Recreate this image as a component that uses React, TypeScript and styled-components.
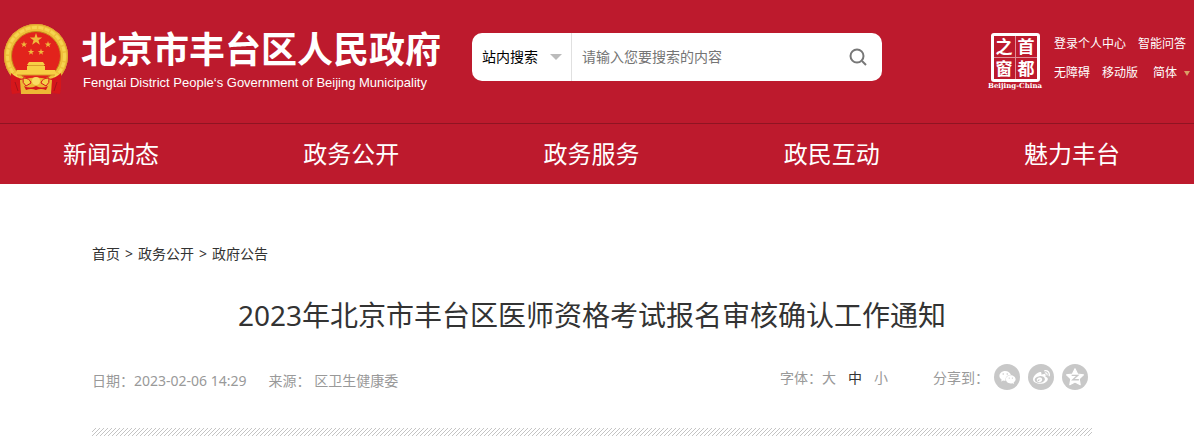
import React from "react";
import styled, { createGlobalStyle } from "styled-components";
import { FaWeixin, FaWeibo } from "react-icons/fa";

const GlobalStyle = createGlobalStyle`
  * { box-sizing: border-box; }
  body {
    margin: 0;
    background: #fff;
    color: #333;
    font-family: "Noto Sans", "Noto Sans CJK SC", sans-serif;
    font-size: 14px;
    line-height: 20px;
  }
  a { color: inherit; text-decoration: none; }
  button, input, select { font: inherit; color: inherit; border: 0; padding: 0; background: none; }
  h1, ul, ol { margin: 0; padding: 0; font-weight: 400; list-style: none; }
`;

const Header = styled.header`
  background: #bd1a2d;
  color: #fff;
`;

const TopBar = styled.div`
  display: flex;
  align-items: flex-start;
  min-height: 123px;
  padding: 24px 4px 0 3px;
`;

const Brand = styled.a`
  display: flex;
  gap: 12px;
  flex: none;
`;

const BrandName = styled.strong`
  display: block;
  padding-top: 2px;
  font-size: 36px;
  line-height: 48px;
  font-weight: 700;
  white-space: nowrap;
`;

const BrandSub = styled.span`
  display: block;
  padding-left: 2px;
  font-family: "Liberation Sans", sans-serif;
  font-size: 13px;
  line-height: 18px;
  white-space: nowrap;
`;

const Search = styled.form`
  display: flex;
  align-items: center;
  flex: 0 1 410px;
  height: 48px;
  margin: 9px auto 0 31px;
  border-radius: 10px;
  background: #fff;
  color: #000;
`;

const Scope = styled.div`
  display: flex;
  align-items: center;
  flex: none;
  width: 100px;
  height: 48px;
  padding: 0 9px 0 10px;
  border-right: 1px solid #e0e0e0;
`;

const ScopeSelect = styled.select`
  appearance: none;
  flex: 1;
  min-width: 0;
  height: 48px;
`;

const Caret = styled.span<{ $half: number; $tall: number; $color: string }>`
  flex: none;
  border: solid transparent;
  border-width: ${p => p.$tall}px ${p => p.$half}px 0;
  border-top-color: ${p => p.$color};
`;

const SearchInput = styled.input`
  flex: 1;
  min-width: 0;
  height: 48px;
  padding: 0 0 2px 10px;
  outline: 0;
  &::placeholder { color: #757575; }
`;

const SearchButton = styled.button`
  display: grid;
  place-items: center;
  width: 48px;
  height: 48px;
`;

const Stamp = styled.a`
  display: flex;
  flex-direction: column;
  align-items: center;
  flex: none;
  width: 56px;
  margin: 9px 11px 0 0;
`;

const Seal = styled.span`
  display: grid;
  grid-template-columns: 1fr 1fr;
  gap: 1px;
  width: 49px;
  height: 49px;
  border: 3px solid #fff;
  border-radius: 3px;
  background: #e08d97;
`;

const SealChar = styled.span`
  display: grid;
  place-items: center;
  background: #bd1a2d;
  font-size: 17px;
  line-height: 20px;
  font-weight: 700;
`;

const StampCaption = styled.span`
  font-family: "DejaVu Serif", serif;
  font-size: 7px;
  line-height: 8px;
  font-weight: 700;
  white-space: nowrap;
`;

const Tools = styled.div`
  flex: none;
  width: 136px;
  margin-top: 10px;
  font-size: 12px;
`;

const ToolRow = styled.div`
  display: flex;
  align-items: center;
  gap: 12px;
  height: 20px;
  margin-bottom: 9px;
`;

const LangButton = styled.button`
  display: flex;
  align-items: center;
  gap: 7px;
  margin-left: 3px;
`;

const Nav = styled.nav`
  border-top: 1px solid #8f1422;
`;

const NavList = styled.ul`
  display: flex;
  justify-content: space-between;
  padding: 0 74px 0 63px;
  font-size: 24px;
  line-height: 60px;
`;

const Main = styled.main`
  padding: 60px 102px 0 92px;
`;

const Crumbs = styled.ol`
  display: flex;
  gap: 5px;
`;

const Title = styled.h1`
  margin-top: 31px;
  font-size: 28px;
  line-height: 40px;
  text-align: center;
`;

const Meta = styled.div`
  display: flex;
  align-items: center;
  margin-top: 28px;
  padding-right: 4px;
  color: #999;
`;

const Origin = styled.div`
  display: flex;
  gap: 22px;
  margin-right: auto;
  padding-top: 8px;
`;

const SizePicker = styled.div`
  display: flex;
  align-items: center;
  margin-right: 45px;
  padding-top: 2px;
`;

const SizeButton = styled.button<{ $active?: boolean }>`
  margin-right: 12px;
  color: ${p => (p.$active ? "#333" : "#999")};
  &:last-child { margin-right: 0; }
`;

const Share = styled.div`
  display: flex;
  align-items: center;
  gap: 5px;
`;

const ShareLabel = styled.span`
  padding-top: 2px;
`;

const ShareButtons = styled.div`
  display: flex;
  gap: 8px;
`;

const ShareButton = styled.button`
  display: grid;
  place-items: center;
  width: 26px;
  height: 26px;
  border-radius: 50%;
  background: #c8c8c8;
  color: #fff;
`;

const Stripe = styled.div`
  height: 8px;
  margin-top: 37px;
  background: linear-gradient(135deg, #fff 45%, #c4c4c4 45% 55%, #fff 55%) 0 0 / 4px 4px;
`;

const starPath = (cx: number, cy: number, r: number, inner = 0.4) =>
  Array.from({ length: 10 }, (_, i) => {
    const radius = i % 2 ? r * inner : r;
    const angle = -Math.PI / 2 + (i * Math.PI) / 5;
    return `${i ? "L" : "M"}${cx + radius * Math.cos(angle)} ${cy + radius * Math.sin(angle)}`;
  }).join("") + "Z";

const Emblem = () => (
  <svg width="66" height="71" viewBox="0 0 66 71" aria-hidden="true">
    <circle cx="33" cy="32" r="32" fill="#efbf3a" />
    <circle cx="33" cy="32" r="28.500" fill="none" stroke="#f6d450" strokeWidth="3" strokeDasharray="5 1.500" />
    <circle cx="33" cy="32" r="31.500" fill="none" stroke="#e0a530" />
    <circle cx="33" cy="32" r="24.500" fill="#e2231c" stroke="#c98a1c" />
    <g fill="#f0b93c">
      <path d={starPath(33, 15.500, 6.500)} />
      <path d={starPath(21, 20.500, 3.400)} />
      <path d={starPath(45, 20.500, 3.400)} />
      <path d={starPath(28, 28, 3.400)} />
      <path d={starPath(38, 28, 3.400)} />
    </g>
    <g fill="#f7cf45">
      <path d="M26 38h14l2 3H24zM24 42h18v4H24zM14 46h38l2 5H12z" />
    </g>
    <path d="M25 41.500h16M14 51h38" stroke="#d99a2a" />
    <path d="M8 49q5 5 12 6l-3 14-8 1-1-6zM58 49q-5 5-12 6l3 14 8 1 1-6z" fill="#d5161b" />
    <path d="M12 58l3 9M54 58l-3 9" stroke="#a8121a" />
    <path d="M17 56q16-5 32 0l-1 14H18z" fill="#edb735" />
    <path d="M20 54q7 0 8 5l-5 3q-4-3-3-8zM46 54q-7 0-8 5l5 3q4-3 3-8z" fill="#f5cf48" stroke="#d5161b" />
    <path d="M21 62q6 3 12 0 6 3 12 0l-2 4q-5-2-10 0-5-2-10 0z" fill="#d5161b" />
    <circle cx="33" cy="57" r="4" fill="#f9dc62" />
  </svg>
);

const navItems = ["新闻动态", "政务公开", "政务服务", "政民互动", "魅力丰台"];

export default function App() {
  return (
    <>
      <GlobalStyle />
      <Header>
        <TopBar>
          <Brand href="#">
            <Emblem />
            <span>
              <BrandName>北京市丰台区人民政府</BrandName>
              <BrandSub>Fengtai District People‘s Government of Beijing Municipality</BrandSub>
            </span>
          </Brand>
          <Search onSubmit={e => e.preventDefault()}>
            <Scope>
              <ScopeSelect aria-label="搜索范围">
                <option>站内搜索</option>
              </ScopeSelect>
              <Caret $half={6} $tall={6} $color="#bbb" />
            </Scope>
            <SearchInput type="text" aria-label="搜索内容" placeholder="请输入您要搜索的内容" />
            <SearchButton type="submit" aria-label="搜索">
              <svg width="18" height="18" viewBox="0 0 18 18" fill="none" stroke="#777" strokeWidth="2">
                <circle cx="8" cy="8" r="6.500" />
                <path d="M13 13l4 4" />
              </svg>
            </SearchButton>
          </Search>
          <Stamp href="#">
            <Seal>
              <SealChar>之</SealChar>
              <SealChar>首</SealChar>
              <SealChar>窗</SealChar>
              <SealChar>都</SealChar>
            </Seal>
            <StampCaption>Beijing-China</StampCaption>
          </Stamp>
          <Tools>
            <ToolRow>
              <a href="#">登录个人中心</a>
              <a href="#">智能问答</a>
            </ToolRow>
            <ToolRow>
              <a href="#">无障碍</a>
              <a href="#">移动版</a>
              <LangButton type="button">
                简体
                <Caret $half={3} $tall={5} $color="#d9a066" />
              </LangButton>
            </ToolRow>
          </Tools>
        </TopBar>
        <Nav>
          <NavList>
            {navItems.map(item => (
              <li key={item}>
                <a href="#">{item}</a>
              </li>
            ))}
          </NavList>
        </Nav>
      </Header>
      <Main>
        <Crumbs>
          <li><a href="#">首页</a></li>
          <li>&gt;</li>
          <li><a href="#">政务公开</a></li>
          <li>&gt;</li>
          <li><a href="#">政府公告</a></li>
        </Crumbs>
        <Title>2023年北京市丰台区医师资格考试报名审核确认工作通知</Title>
        <Meta>
          <Origin>
            <span>日期：2023-02-06 14:29</span>
            <span>来源： 区卫生健康委</span>
          </Origin>
          <SizePicker>
            <span>字体：</span>
            <SizeButton type="button">大</SizeButton>
            <SizeButton type="button" $active>中</SizeButton>
            <SizeButton type="button">小</SizeButton>
          </SizePicker>
          <Share>
            <ShareLabel>分享到：</ShareLabel>
            <ShareButtons>
              <ShareButton type="button" aria-label="微信"><FaWeixin size={17} /></ShareButton>
              <ShareButton type="button" aria-label="微博"><FaWeibo size={17} /></ShareButton>
              <ShareButton type="button" aria-label="QQ空间">
                <svg width="20" height="20" viewBox="0 0 18 18">
                  <path d={starPath(9, 9.500, 8, 0.5)} fill="#fff" stroke="#fff" strokeLinejoin="round" />
                  <path d="M6 7.500h5.500L7 11.500h5.500" fill="none" stroke="#c8c8c8" strokeWidth="1.200" />
                </svg>
              </ShareButton>
            </ShareButtons>
          </Share>
        </Meta>
        <Stripe />
      </Main>
    </>
  );
}
